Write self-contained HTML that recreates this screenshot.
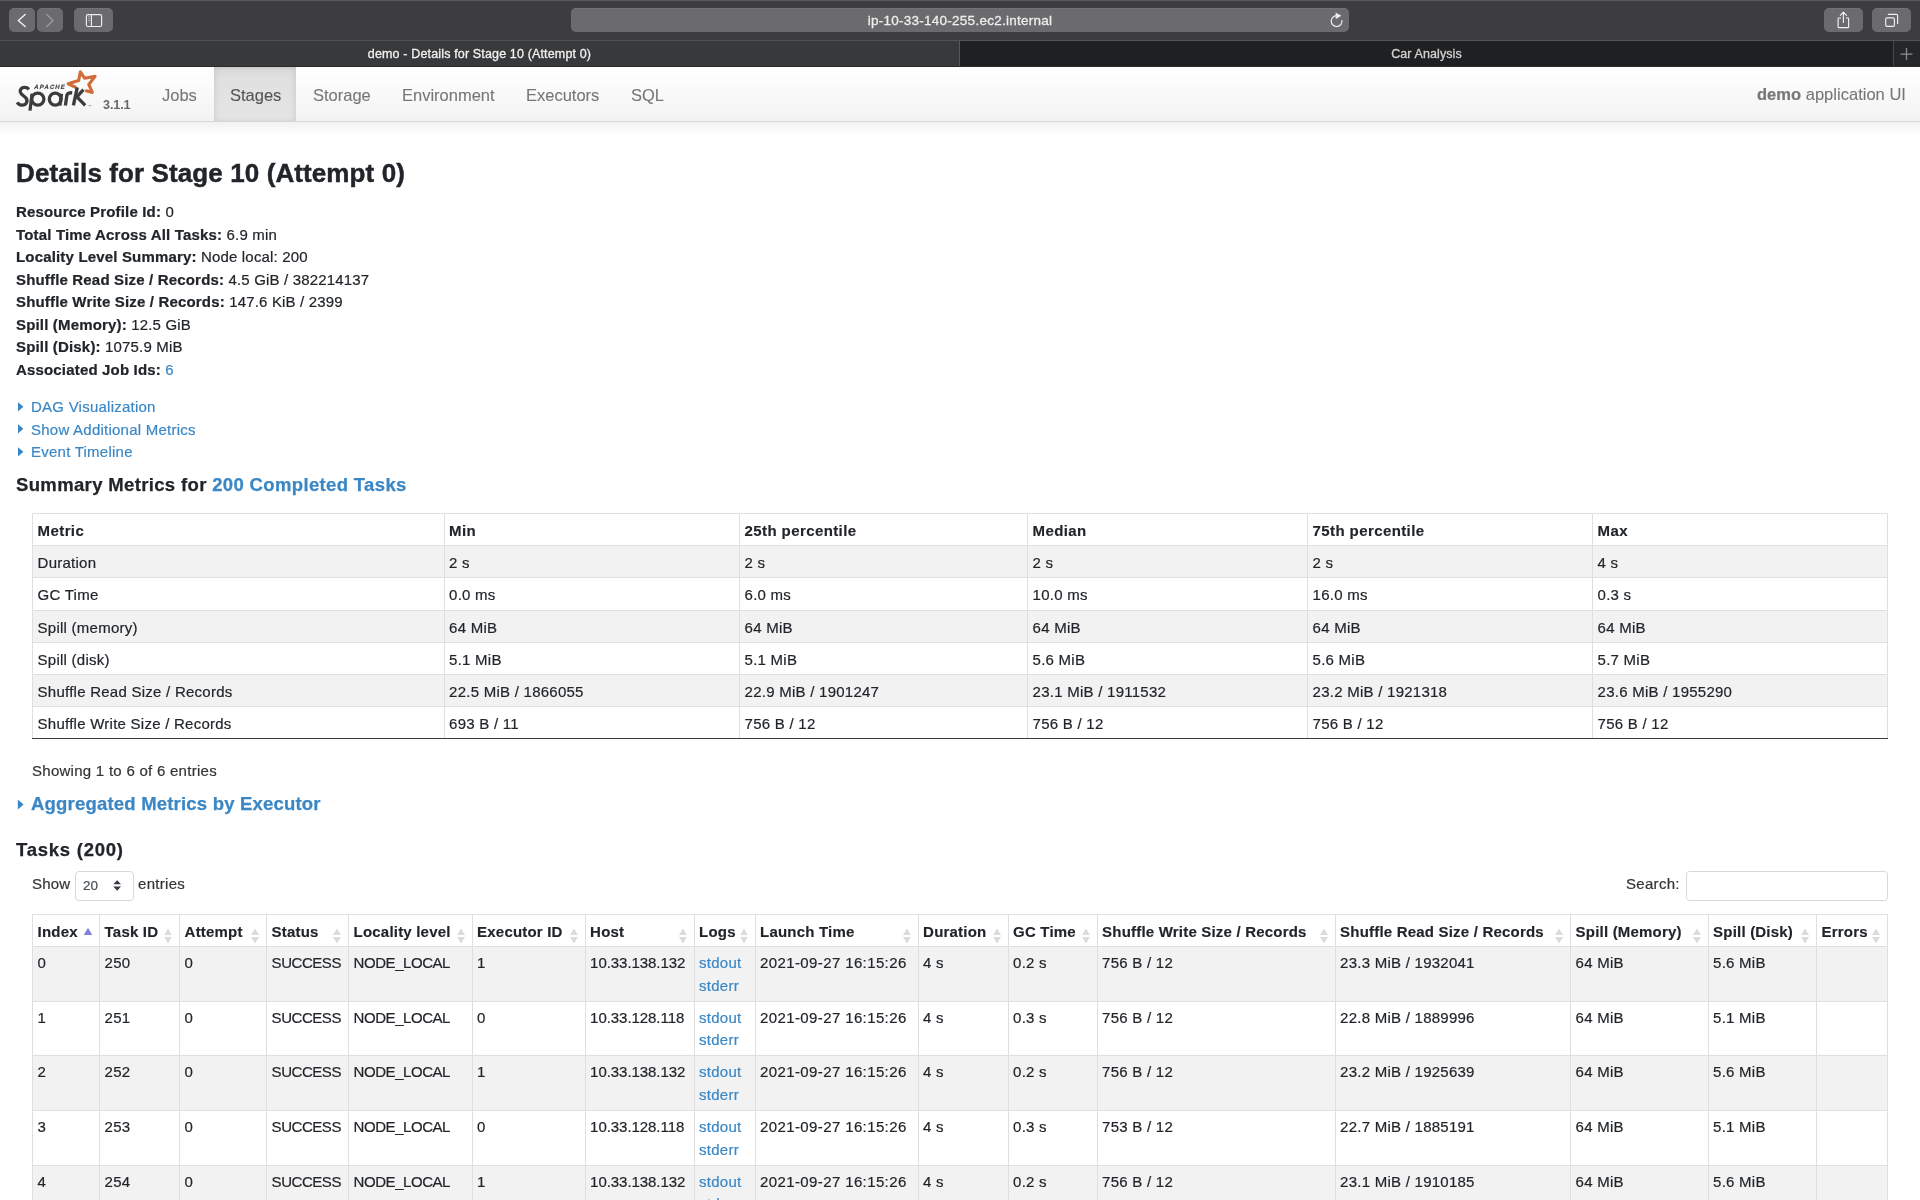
<!DOCTYPE html><html><head><meta charset="utf-8"><title>Spark</title><style>
*{box-sizing:border-box;margin:0;padding:0}
html,body{width:1920px;height:1200px;overflow:hidden;background:#fff}
body{font-family:"Liberation Sans",sans-serif;color:#212529;position:relative}
svg{position:absolute;overflow:visible}
#root{position:absolute;left:0;top:0;width:1920px;height:1200px;overflow:hidden;will-change:transform;-webkit-text-stroke:.2px currentColor}
b{-webkit-text-stroke:.22px currentColor}
.th{-webkit-text-stroke:.15px currentColor}
h3{-webkit-text-stroke:.45px currentColor}
h4,h4 b{-webkit-text-stroke:.25px currentColor}
svg text{-webkit-text-stroke:0}
#tab1,#tab2,#url{-webkit-text-stroke:.3px currentColor}
.nl{-webkit-text-stroke:.1px currentColor}
#toolbar{position:absolute;left:0;top:0;width:1920px;height:41px;background:#3d3d40;border-top:1px solid #5a5a5c;border-bottom:1px solid #525254}
.tbtn{position:absolute;top:7px;height:24px;background:#6b6b6e;border-radius:5px;box-shadow:inset 0 1px 0 rgba(255,255,255,.06)}
#url{position:absolute;left:571px;top:7px;width:778px;height:24px;background:#6b6b6e;border-radius:5px;color:#eeeeee;font-size:13.5px;text-align:center;line-height:24px;letter-spacing:.25px;padding-top:1px;box-shadow:inset 0 1px 0 rgba(255,255,255,.06)}
#tabbar{position:absolute;left:0;top:41px;width:1920px;height:26px;background:#1f2022;border-bottom:1px solid #2a2a2c}
#tab1{position:absolute;left:0;top:0;width:959px;height:25px;background:#38393b;color:#f2f2f2;font-size:12.5px;text-align:center;line-height:25px;letter-spacing:.15px;padding-top:.5px}
#tabdiv{position:absolute;left:959px;top:0;width:1px;height:25px;background:#58585a}
#tab2{position:absolute;left:960px;top:0;width:933px;height:25px;color:#d2d2d2;font-size:12.5px;text-align:center;line-height:25px;letter-spacing:.1px;padding-top:.5px}
#plusdiv{position:absolute;left:1893px;top:0;width:1px;height:25px;background:#48484a}
#plusbg{position:absolute;left:1894px;top:0;width:26px;height:25px;background:#252628}
#nav{position:absolute;left:0;top:67px;width:1920px;height:55px;background:linear-gradient(#fff,#f3f3f3);border-bottom:1px solid #d6d6d6}
#navsh{position:absolute;left:0;top:122px;width:1920px;height:14px;background:linear-gradient(rgba(0,0,0,.055),rgba(0,0,0,0))}
.nl{position:absolute;top:1px;height:54px;line-height:54px;font-size:16.5px;color:#777;white-space:nowrap}
#act{position:absolute;left:214px;top:0;width:82px;height:54px;background:linear-gradient(#dfdfdf,#e5e5e5);box-shadow:inset 0 3px 9px rgba(0,0,0,.07),inset 2px 0 4px rgba(0,0,0,.03),inset -2px 0 4px rgba(0,0,0,.03)}
h3{position:absolute;left:16px;top:158px;font-size:26px;font-weight:bold;white-space:nowrap;line-height:30px;letter-spacing:.1px}
.li{position:absolute;left:16px;font-size:15px;white-space:nowrap;line-height:20px;letter-spacing:.17px}
a,.lnk{color:#3a87c6;text-decoration:none}
.lnk{letter-spacing:.24px}
.arrow{position:absolute;left:17.8px;width:6px;height:10px}
h4{position:absolute;left:16px;font-size:18.5px;font-weight:bold;white-space:nowrap;line-height:20px;letter-spacing:.2px}
#summ{position:absolute;left:32px;top:513px;width:1856px;height:227px}
#tasks{position:absolute;left:32px;top:914px;width:1856px;height:300px}
.stripe{position:absolute;left:0;width:1855px;background:#f2f2f2}
.hl{position:absolute;left:0;width:1856px;height:1px;background:#dfdfe1}
.hl.dark{background:#3a3a3c;height:1px}
.vl{position:absolute;top:0;width:1px;height:225px;background:#dfdfe1}
#tasks .vl{height:300px}
.sc{position:absolute;font-size:15px;white-space:nowrap;line-height:20px;letter-spacing:.25px}
#tasks .sc{line-height:22.5px}
.th{font-weight:bold;letter-spacing:.4px}
#tasks .th{letter-spacing:.2px}
</style></head><body><div id="root">
<div id="toolbar">
  <div class="tbtn" style="left:9px;width:26px"></div>
  <div class="tbtn" style="left:37px;width:26px"></div>
  <div class="tbtn" style="left:74px;width:39px"></div>
  <div id="url">ip-10-33-140-255.ec2.internal</div>
  <div class="tbtn" style="left:1824px;width:39px"></div>
  <div class="tbtn" style="left:1872px;width:39px"></div>
</div>
<svg style="left:0;top:0" width="1920" height="41" viewBox="0 0 1920 41">
<g fill="none" stroke-linecap="round" stroke-linejoin="round">
<path d="M25.2 14.5 L18.3 20.5 L25.2 26.5" stroke="#f2f2f2" stroke-width="1.4"/>
<path d="M46.7 14.5 L53.1 20.5 L46.7 26.5" stroke="#9c9c9e" stroke-width="1.4"/>
<rect x="86.4" y="14.6" width="15.2" height="11.9" rx="1.5" stroke="#f0f0f0" stroke-width="1.15"/>
<path d="M91.4 14.6 L91.4 26.5" stroke="#f0f0f0" stroke-width="1.15"/>
<path d="M88.5 16.7 L89.5 16.7 M88.5 18.7 L89.5 18.7 M88.5 20.7 L89.5 20.7" stroke="#c8c8c8" stroke-width="0.8"/>
<path d="M1336.6 15.7 A5.4 5.4 0 1 0 1341.95 20.2" stroke="#ececec" stroke-width="1.25" stroke-linecap="butt"/>
<path d="M1336 13 L1341 15.7 L1336.2 18.7 Z" fill="#f0f0f0" stroke="#f0f0f0" stroke-width=".4"/>
<path d="M1840.6 18 L1838.7 18 Q1838.1 18 1838.1 18.7 L1838.1 27 Q1838.1 27.6 1838.8 27.6 L1848 27.6 Q1848.6 27.6 1848.6 27 L1848.6 18.7 Q1848.6 18 1848 18 L1846.2 18" stroke="#f0f0f0" stroke-width="1.15"/>
<path d="M1843.4 12.2 L1843.4 22.5 M1840.3 15.3 L1843.4 12.1 L1846.5 15.3" stroke="#f0f0f0" stroke-width="1.15"/>
<rect x="1885.7" y="17.8" width="8.7" height="8.6" rx="1.4" stroke="#f0f0f0" stroke-width="1.15"/>
<path d="M1888.3 14.3 L1896.2 14.3 Q1897.6 14.3 1897.6 15.7 L1897.6 23.4" stroke="#f0f0f0" stroke-width="1.15"/>
</g></svg>
<div id="tabbar">
  <div id="tab1">demo - Details for Stage 10 (Attempt 0)</div>
  <div id="tabdiv"></div>
  <div id="tab2">Car Analysis</div>
  <div id="plusdiv"></div><div id="plusbg"></div>
  <svg style="left:1894px;top:0" width="26" height="25" viewBox="1894 41 26 25"><path d="M1906.5 48 L1906.5 60 M1900.5 54.1 L1912.5 54.1" stroke="#8c8c8e" stroke-width="1.3"/></svg>
</div>
<div id="navsh"></div>
<div id="nav">
  <div id="act"></div>
  <div class="nl" style="left:162px">Jobs</div>
  <div class="nl" style="left:230px;color:#555">Stages</div>
  <div class="nl" style="left:313px">Storage</div>
  <div class="nl" style="left:402px">Environment</div>
  <div class="nl" style="left:526px">Executors</div>
  <div class="nl" style="left:631px">SQL</div>
  <div class="nl" style="left:1757px;top:.2px;letter-spacing:.02px"><b>demo</b> application UI</div>
</div><svg style="left:0;top:67px" width="140" height="54" viewBox="0 67 140 54">
<path d="M85.2 90.4 L92.3 92.4 L88.8 84.5 L95.1 76.4 L84.6 78.2 L80.4 71.9 L78.6 80.6 L68.2 83.8 L76.2 87.5" fill="none" stroke="#cf6c38" stroke-width="3.1" stroke-linejoin="round" stroke-linecap="butt"/>
<g fill="none" stroke="#3c3c3d" stroke-width="3.3" stroke-linecap="butt">
<path d="M28.9 89.3 C27.5 87.7 25.8 87.3 24.3 87.4 C21.5 87.6 19.8 89.6 20.3 92 C20.8 94.3 23.4 95.6 25 97 C27 98.7 27.5 100.8 26.5 102.8 C25.5 104.6 23.4 105.3 21.5 105.2 C19.7 105.1 18.2 104 17.2 102.4"/>
<path d="M32.1 93.6 L30 110.6"/>
<ellipse cx="37.8" cy="99.1" rx="6.1" ry="6.0"/>
<ellipse cx="55.2" cy="99.1" rx="5.9" ry="6.0"/>
<path d="M61.5 93.8 L59.9 105.6"/>
<path d="M65.4 105.6 L66.9 95.2 C67.6 93.2 69.6 92.6 72.2 92.8"/>
<path d="M77.3 87.3 L73.4 105.4"/>
<path d="M83.4 89.7 L76.0 97.9"/>
<path d="M76.9 96.9 L85.2 105.4"/>
</g>
<path d="M88.5 105.6 L91.3 105.6" stroke="#777" stroke-width=".7"/>
<text x="56" y="88.8" font-family="Liberation Sans" font-weight="bold" font-size="6.1" fill="#3e3e40" stroke="#3e3e40" stroke-width=".15" letter-spacing="1.05" transform="skewX(-14)">APACHE</text>
<text x="103" y="109.4" font-family="Liberation Sans" font-weight="bold" font-size="12.6" fill="#686868" letter-spacing="-.1">3.1.1</text>
</svg>
<h3>Details for Stage 10 (Attempt 0)</h3>
<div class="li" style="top:202.0px"><b>Resource Profile Id:</b> 0</div>
<div class="li" style="top:224.5px"><b>Total Time Across All Tasks:</b> 6.9 min</div>
<div class="li" style="top:247.0px"><b>Locality Level Summary:</b> Node local: 200</div>
<div class="li" style="top:269.5px"><b>Shuffle Read Size / Records:</b> 4.5 GiB / 382214137</div>
<div class="li" style="top:292.0px"><b>Shuffle Write Size / Records:</b> 147.6 KiB / 2399</div>
<div class="li" style="top:314.5px"><b>Spill (Memory):</b> 12.5 GiB</div>
<div class="li" style="top:337.0px"><b>Spill (Disk):</b> 1075.9 MiB</div>
<div class="li" style="top:359.5px"><b>Associated Job Ids:</b> <a>6</a></div>
<svg style="left:17px;top:401.5px" width="8" height="11" viewBox="0 0 8 11"><path d="M1 0.3 L6.4 4.85 L1 9.4 Z" fill="#3a87c6"/></svg><div class="li lnk" style="left:31px;top:397.0px">DAG Visualization</div>
<svg style="left:17px;top:424.0px" width="8" height="11" viewBox="0 0 8 11"><path d="M1 0.3 L6.4 4.85 L1 9.4 Z" fill="#3a87c6"/></svg><div class="li lnk" style="left:31px;top:419.5px">Show Additional Metrics</div>
<svg style="left:17px;top:446.5px" width="8" height="11" viewBox="0 0 8 11"><path d="M1 0.3 L6.4 4.85 L1 9.4 Z" fill="#3a87c6"/></svg><div class="li lnk" style="left:31px;top:442.0px">Event Timeline</div>
<h4 style="top:474.5px;letter-spacing:.35px">Summary Metrics for <a>200 Completed Tasks</a></h4>
<div id="summ">
<div class="stripe" style="top:32.0px;height:32.0px"></div>
<div class="stripe" style="top:97.0px;height:32.0px"></div>
<div class="stripe" style="top:161.0px;height:32.0px"></div>
<div class="hl" style="top:0.0px"></div>
<div class="hl" style="top:32.0px"></div>
<div class="hl" style="top:64.0px"></div>
<div class="hl" style="top:97.0px"></div>
<div class="hl" style="top:129.0px"></div>
<div class="hl" style="top:161.0px"></div>
<div class="hl" style="top:193.0px"></div>
<div class="hl dark" style="top:225.0px"></div>
<div class="vl" style="left:0.0px"></div>
<div class="vl" style="left:411.5px"></div>
<div class="vl" style="left:707.0px"></div>
<div class="vl" style="left:995.0px"></div>
<div class="vl" style="left:1275.0px"></div>
<div class="vl" style="left:1560.0px"></div>
<div class="vl" style="left:1855.0px"></div>
<div class="sc th" style="left:5.6px;top:8px">Metric</div>
<div class="sc th" style="left:417.1px;top:8px">Min</div>
<div class="sc th" style="left:712.6px;top:8px">25th percentile</div>
<div class="sc th" style="left:1000.6px;top:8px">Median</div>
<div class="sc th" style="left:1280.6px;top:8px">75th percentile</div>
<div class="sc th" style="left:1565.6px;top:8px">Max</div>
<div class="sc" style="left:5.6px;top:39.7px">Duration</div>
<div class="sc" style="left:417.1px;top:39.7px">2 s</div>
<div class="sc" style="left:712.6px;top:39.7px">2 s</div>
<div class="sc" style="left:1000.6px;top:39.7px">2 s</div>
<div class="sc" style="left:1280.6px;top:39.7px">2 s</div>
<div class="sc" style="left:1565.6px;top:39.7px">4 s</div>
<div class="sc" style="left:5.6px;top:71.7px">GC Time</div>
<div class="sc" style="left:417.1px;top:71.7px">0.0 ms</div>
<div class="sc" style="left:712.6px;top:71.7px">6.0 ms</div>
<div class="sc" style="left:1000.6px;top:71.7px">10.0 ms</div>
<div class="sc" style="left:1280.6px;top:71.7px">16.0 ms</div>
<div class="sc" style="left:1565.6px;top:71.7px">0.3 s</div>
<div class="sc" style="left:5.6px;top:104.7px">Spill (memory)</div>
<div class="sc" style="left:417.1px;top:104.7px">64 MiB</div>
<div class="sc" style="left:712.6px;top:104.7px">64 MiB</div>
<div class="sc" style="left:1000.6px;top:104.7px">64 MiB</div>
<div class="sc" style="left:1280.6px;top:104.7px">64 MiB</div>
<div class="sc" style="left:1565.6px;top:104.7px">64 MiB</div>
<div class="sc" style="left:5.6px;top:136.7px">Spill (disk)</div>
<div class="sc" style="left:417.1px;top:136.7px">5.1 MiB</div>
<div class="sc" style="left:712.6px;top:136.7px">5.1 MiB</div>
<div class="sc" style="left:1000.6px;top:136.7px">5.6 MiB</div>
<div class="sc" style="left:1280.6px;top:136.7px">5.6 MiB</div>
<div class="sc" style="left:1565.6px;top:136.7px">5.7 MiB</div>
<div class="sc" style="left:5.6px;top:168.7px">Shuffle Read Size / Records</div>
<div class="sc" style="left:417.1px;top:168.7px">22.5 MiB / 1866055</div>
<div class="sc" style="left:712.6px;top:168.7px">22.9 MiB / 1901247</div>
<div class="sc" style="left:1000.6px;top:168.7px">23.1 MiB / 1911532</div>
<div class="sc" style="left:1280.6px;top:168.7px">23.2 MiB / 1921318</div>
<div class="sc" style="left:1565.6px;top:168.7px">23.6 MiB / 1955290</div>
<div class="sc" style="left:5.6px;top:200.7px">Shuffle Write Size / Records</div>
<div class="sc" style="left:417.1px;top:200.7px">693 B / 11</div>
<div class="sc" style="left:712.6px;top:200.7px">756 B / 12</div>
<div class="sc" style="left:1000.6px;top:200.7px">756 B / 12</div>
<div class="sc" style="left:1280.6px;top:200.7px">756 B / 12</div>
<div class="sc" style="left:1565.6px;top:200.7px">756 B / 12</div>
</div>
<div class="li" style="left:32px;top:761px;color:#333;letter-spacing:.27px">Showing 1 to 6 of 6 entries</div>
<svg style="left:17px;top:798.5px" width="8" height="12" viewBox="0 0 8 12"><path d="M0.8 0.5 L6.6 5.5 L0.8 10.5 Z" fill="#3a87c6"/></svg><h4 style="left:31px;top:794px"><a>Aggregated Metrics by Executor</a></h4>
<h4 style="top:839.7px;letter-spacing:.75px">Tasks (200)</h4>
<div class="li" style="left:32px;top:874.2px;color:#333">Show</div>
<div style="position:absolute;left:75px;top:871px;width:59px;height:30px;border:1px solid #d3d8de;border-radius:4px"></div>
<div style="position:absolute;left:83px;top:876px;font-size:13.5px;line-height:20px;color:#495057">20</div>
<svg style="left:112px;top:879px" width="10" height="13" viewBox="0 0 10 13"><path d="M1.3 5.2 L5.2 1.2 L9 5.2 Z M1.3 7.6 L9 7.6 L5.2 11.8 Z" fill="#343a40"/></svg>
<div class="li" style="left:138px;top:874.2px;color:#333;letter-spacing:.3px">entries</div>
<div class="li" style="left:1626px;top:873.5px;color:#333;letter-spacing:.3px">Search:</div>
<div style="position:absolute;left:1685.5px;top:871px;width:202px;height:30px;border:1px solid #d3d8de;border-radius:3.5px"></div>
<div id="tasks">
<div class="stripe" style="top:32.0px;height:55.0px"></div>
<div class="stripe" style="top:141.0px;height:55.0px"></div>
<div class="stripe" style="top:251.0px;height:55.0px"></div>
<div class="hl" style="top:0.0px"></div>
<div class="hl" style="top:32.0px"></div>
<div class="hl" style="top:87.0px"></div>
<div class="hl" style="top:141.0px"></div>
<div class="hl" style="top:196.0px"></div>
<div class="hl" style="top:251.0px"></div>
<div class="hl" style="top:306.0px"></div>
<div class="vl" style="left:0.0px"></div>
<div class="vl" style="left:67.0px"></div>
<div class="vl" style="left:147.0px"></div>
<div class="vl" style="left:234.0px"></div>
<div class="vl" style="left:316.0px"></div>
<div class="vl" style="left:439.5px"></div>
<div class="vl" style="left:552.5px"></div>
<div class="vl" style="left:661.5px"></div>
<div class="vl" style="left:722.5px"></div>
<div class="vl" style="left:885.5px"></div>
<div class="vl" style="left:975.5px"></div>
<div class="vl" style="left:1064.5px"></div>
<div class="vl" style="left:1302.5px"></div>
<div class="vl" style="left:1538.0px"></div>
<div class="vl" style="left:1675.5px"></div>
<div class="vl" style="left:1784.0px"></div>
<div class="vl" style="left:1855.0px"></div>
<div class="sc th" style="left:5.6px;top:6.8px">Index</div>
<svg style="left:51.3px;top:13px" width="10" height="18" viewBox="0 0 10 18"><path d="M0.75 8 L5 0.8 L9.25 8 Z" fill="#7f83de"/></svg>
<div class="sc th" style="left:72.6px;top:6.8px">Task ID</div>
<svg style="left:131.3px;top:13px" width="10" height="18" viewBox="0 0 10 18"><path d="M1 8 L5 1.4 L9 8 Z M1 9.9 L9 9.9 L5 16.5 Z" fill="#dcdcdc"/></svg>
<div class="sc th" style="left:152.6px;top:6.8px">Attempt</div>
<svg style="left:218.3px;top:13px" width="10" height="18" viewBox="0 0 10 18"><path d="M1 8 L5 1.4 L9 8 Z M1 9.9 L9 9.9 L5 16.5 Z" fill="#dcdcdc"/></svg>
<div class="sc th" style="left:239.6px;top:6.8px">Status</div>
<svg style="left:300.3px;top:13px" width="10" height="18" viewBox="0 0 10 18"><path d="M1 8 L5 1.4 L9 8 Z M1 9.9 L9 9.9 L5 16.5 Z" fill="#dcdcdc"/></svg>
<div class="sc th" style="left:321.6px;top:6.8px">Locality level</div>
<svg style="left:423.8px;top:13px" width="10" height="18" viewBox="0 0 10 18"><path d="M1 8 L5 1.4 L9 8 Z M1 9.9 L9 9.9 L5 16.5 Z" fill="#dcdcdc"/></svg>
<div class="sc th" style="left:445.1px;top:6.8px">Executor ID</div>
<svg style="left:536.8px;top:13px" width="10" height="18" viewBox="0 0 10 18"><path d="M1 8 L5 1.4 L9 8 Z M1 9.9 L9 9.9 L5 16.5 Z" fill="#dcdcdc"/></svg>
<div class="sc th" style="left:558.1px;top:6.8px">Host</div>
<svg style="left:645.8px;top:13px" width="10" height="18" viewBox="0 0 10 18"><path d="M1 8 L5 1.4 L9 8 Z M1 9.9 L9 9.9 L5 16.5 Z" fill="#dcdcdc"/></svg>
<div class="sc th" style="left:667.1px;top:6.8px">Logs</div>
<svg style="left:706.8px;top:13px" width="10" height="18" viewBox="0 0 10 18"><path d="M1 8 L5 1.4 L9 8 Z M1 9.9 L9 9.9 L5 16.5 Z" fill="#dcdcdc"/></svg>
<div class="sc th" style="left:728.1px;top:6.8px">Launch Time</div>
<svg style="left:869.8px;top:13px" width="10" height="18" viewBox="0 0 10 18"><path d="M1 8 L5 1.4 L9 8 Z M1 9.9 L9 9.9 L5 16.5 Z" fill="#dcdcdc"/></svg>
<div class="sc th" style="left:891.1px;top:6.8px">Duration</div>
<svg style="left:959.8px;top:13px" width="10" height="18" viewBox="0 0 10 18"><path d="M1 8 L5 1.4 L9 8 Z M1 9.9 L9 9.9 L5 16.5 Z" fill="#dcdcdc"/></svg>
<div class="sc th" style="left:981.1px;top:6.8px">GC Time</div>
<svg style="left:1048.8px;top:13px" width="10" height="18" viewBox="0 0 10 18"><path d="M1 8 L5 1.4 L9 8 Z M1 9.9 L9 9.9 L5 16.5 Z" fill="#dcdcdc"/></svg>
<div class="sc th" style="left:1070.1px;top:6.8px">Shuffle Write Size / Records</div>
<svg style="left:1286.8px;top:13px" width="10" height="18" viewBox="0 0 10 18"><path d="M1 8 L5 1.4 L9 8 Z M1 9.9 L9 9.9 L5 16.5 Z" fill="#dcdcdc"/></svg>
<div class="sc th" style="left:1308.1px;top:6.8px">Shuffle Read Size / Records</div>
<svg style="left:1522.3px;top:13px" width="10" height="18" viewBox="0 0 10 18"><path d="M1 8 L5 1.4 L9 8 Z M1 9.9 L9 9.9 L5 16.5 Z" fill="#dcdcdc"/></svg>
<div class="sc th" style="left:1543.6px;top:6.8px">Spill (Memory)</div>
<svg style="left:1659.8px;top:13px" width="10" height="18" viewBox="0 0 10 18"><path d="M1 8 L5 1.4 L9 8 Z M1 9.9 L9 9.9 L5 16.5 Z" fill="#dcdcdc"/></svg>
<div class="sc th" style="left:1681.1px;top:6.8px">Spill (Disk)</div>
<svg style="left:1768.3px;top:13px" width="10" height="18" viewBox="0 0 10 18"><path d="M1 8 L5 1.4 L9 8 Z M1 9.9 L9 9.9 L5 16.5 Z" fill="#dcdcdc"/></svg>
<div class="sc th" style="left:1789.6px;top:6.8px">Errors</div>
<svg style="left:1839.3px;top:13px" width="10" height="18" viewBox="0 0 10 18"><path d="M1 8 L5 1.4 L9 8 Z M1 9.9 L9 9.9 L5 16.5 Z" fill="#dcdcdc"/></svg>
<div class="sc" style="left:5.6px;top:38.0px">0</div>
<div class="sc" style="left:72.6px;top:38.0px">250</div>
<div class="sc" style="left:152.6px;top:38.0px">0</div>
<div class="sc" style="letter-spacing:-.45px;left:239.6px;top:38.0px">SUCCESS</div>
<div class="sc" style="letter-spacing:-.45px;left:321.6px;top:38.0px">NODE_LOCAL</div>
<div class="sc" style="left:445.1px;top:38.0px">1</div>
<div class="sc" style="letter-spacing:-.05px;left:558.1px;top:38.0px">10.33.138.132</div>
<div class="sc" style="left:667.1px;top:38.0px"><a>stdout</a><br><a>stderr</a></div>
<div class="sc" style="letter-spacing:.38px;left:728.1px;top:38.0px">2021-09-27 16:15:26</div>
<div class="sc" style="left:891.1px;top:38.0px">4 s</div>
<div class="sc" style="left:981.1px;top:38.0px">0.2 s</div>
<div class="sc" style="left:1070.1px;top:38.0px">756 B / 12</div>
<div class="sc" style="left:1308.1px;top:38.0px">23.3 MiB / 1932041</div>
<div class="sc" style="left:1543.6px;top:38.0px">64 MiB</div>
<div class="sc" style="left:1681.1px;top:38.0px">5.6 MiB</div>
<div class="sc" style="left:1789.6px;top:38.0px"></div>
<div class="sc" style="left:5.6px;top:92.7px">1</div>
<div class="sc" style="left:72.6px;top:92.7px">251</div>
<div class="sc" style="left:152.6px;top:92.7px">0</div>
<div class="sc" style="letter-spacing:-.45px;left:239.6px;top:92.7px">SUCCESS</div>
<div class="sc" style="letter-spacing:-.45px;left:321.6px;top:92.7px">NODE_LOCAL</div>
<div class="sc" style="left:445.1px;top:92.7px">0</div>
<div class="sc" style="letter-spacing:-.05px;left:558.1px;top:92.7px">10.33.128.118</div>
<div class="sc" style="left:667.1px;top:92.7px"><a>stdout</a><br><a>stderr</a></div>
<div class="sc" style="letter-spacing:.38px;left:728.1px;top:92.7px">2021-09-27 16:15:26</div>
<div class="sc" style="left:891.1px;top:92.7px">4 s</div>
<div class="sc" style="left:981.1px;top:92.7px">0.3 s</div>
<div class="sc" style="left:1070.1px;top:92.7px">756 B / 12</div>
<div class="sc" style="left:1308.1px;top:92.7px">22.8 MiB / 1889996</div>
<div class="sc" style="left:1543.6px;top:92.7px">64 MiB</div>
<div class="sc" style="left:1681.1px;top:92.7px">5.1 MiB</div>
<div class="sc" style="left:1789.6px;top:92.7px"></div>
<div class="sc" style="left:5.6px;top:147.3px">2</div>
<div class="sc" style="left:72.6px;top:147.3px">252</div>
<div class="sc" style="left:152.6px;top:147.3px">0</div>
<div class="sc" style="letter-spacing:-.45px;left:239.6px;top:147.3px">SUCCESS</div>
<div class="sc" style="letter-spacing:-.45px;left:321.6px;top:147.3px">NODE_LOCAL</div>
<div class="sc" style="left:445.1px;top:147.3px">1</div>
<div class="sc" style="letter-spacing:-.05px;left:558.1px;top:147.3px">10.33.138.132</div>
<div class="sc" style="left:667.1px;top:147.3px"><a>stdout</a><br><a>stderr</a></div>
<div class="sc" style="letter-spacing:.38px;left:728.1px;top:147.3px">2021-09-27 16:15:26</div>
<div class="sc" style="left:891.1px;top:147.3px">4 s</div>
<div class="sc" style="left:981.1px;top:147.3px">0.2 s</div>
<div class="sc" style="left:1070.1px;top:147.3px">756 B / 12</div>
<div class="sc" style="left:1308.1px;top:147.3px">23.2 MiB / 1925639</div>
<div class="sc" style="left:1543.6px;top:147.3px">64 MiB</div>
<div class="sc" style="left:1681.1px;top:147.3px">5.6 MiB</div>
<div class="sc" style="left:1789.6px;top:147.3px"></div>
<div class="sc" style="left:5.6px;top:202.0px">3</div>
<div class="sc" style="left:72.6px;top:202.0px">253</div>
<div class="sc" style="left:152.6px;top:202.0px">0</div>
<div class="sc" style="letter-spacing:-.45px;left:239.6px;top:202.0px">SUCCESS</div>
<div class="sc" style="letter-spacing:-.45px;left:321.6px;top:202.0px">NODE_LOCAL</div>
<div class="sc" style="left:445.1px;top:202.0px">0</div>
<div class="sc" style="letter-spacing:-.05px;left:558.1px;top:202.0px">10.33.128.118</div>
<div class="sc" style="left:667.1px;top:202.0px"><a>stdout</a><br><a>stderr</a></div>
<div class="sc" style="letter-spacing:.38px;left:728.1px;top:202.0px">2021-09-27 16:15:26</div>
<div class="sc" style="left:891.1px;top:202.0px">4 s</div>
<div class="sc" style="left:981.1px;top:202.0px">0.3 s</div>
<div class="sc" style="left:1070.1px;top:202.0px">753 B / 12</div>
<div class="sc" style="left:1308.1px;top:202.0px">22.7 MiB / 1885191</div>
<div class="sc" style="left:1543.6px;top:202.0px">64 MiB</div>
<div class="sc" style="left:1681.1px;top:202.0px">5.1 MiB</div>
<div class="sc" style="left:1789.6px;top:202.0px"></div>
<div class="sc" style="left:5.6px;top:256.6px">4</div>
<div class="sc" style="left:72.6px;top:256.6px">254</div>
<div class="sc" style="left:152.6px;top:256.6px">0</div>
<div class="sc" style="letter-spacing:-.45px;left:239.6px;top:256.6px">SUCCESS</div>
<div class="sc" style="letter-spacing:-.45px;left:321.6px;top:256.6px">NODE_LOCAL</div>
<div class="sc" style="left:445.1px;top:256.6px">1</div>
<div class="sc" style="letter-spacing:-.05px;left:558.1px;top:256.6px">10.33.138.132</div>
<div class="sc" style="left:667.1px;top:256.6px"><a>stdout</a><br><a>stderr</a></div>
<div class="sc" style="letter-spacing:.38px;left:728.1px;top:256.6px">2021-09-27 16:15:26</div>
<div class="sc" style="left:891.1px;top:256.6px">4 s</div>
<div class="sc" style="left:981.1px;top:256.6px">0.2 s</div>
<div class="sc" style="left:1070.1px;top:256.6px">756 B / 12</div>
<div class="sc" style="left:1308.1px;top:256.6px">23.1 MiB / 1910185</div>
<div class="sc" style="left:1543.6px;top:256.6px">64 MiB</div>
<div class="sc" style="left:1681.1px;top:256.6px">5.6 MiB</div>
<div class="sc" style="left:1789.6px;top:256.6px"></div>
</div>
</div></body></html>
